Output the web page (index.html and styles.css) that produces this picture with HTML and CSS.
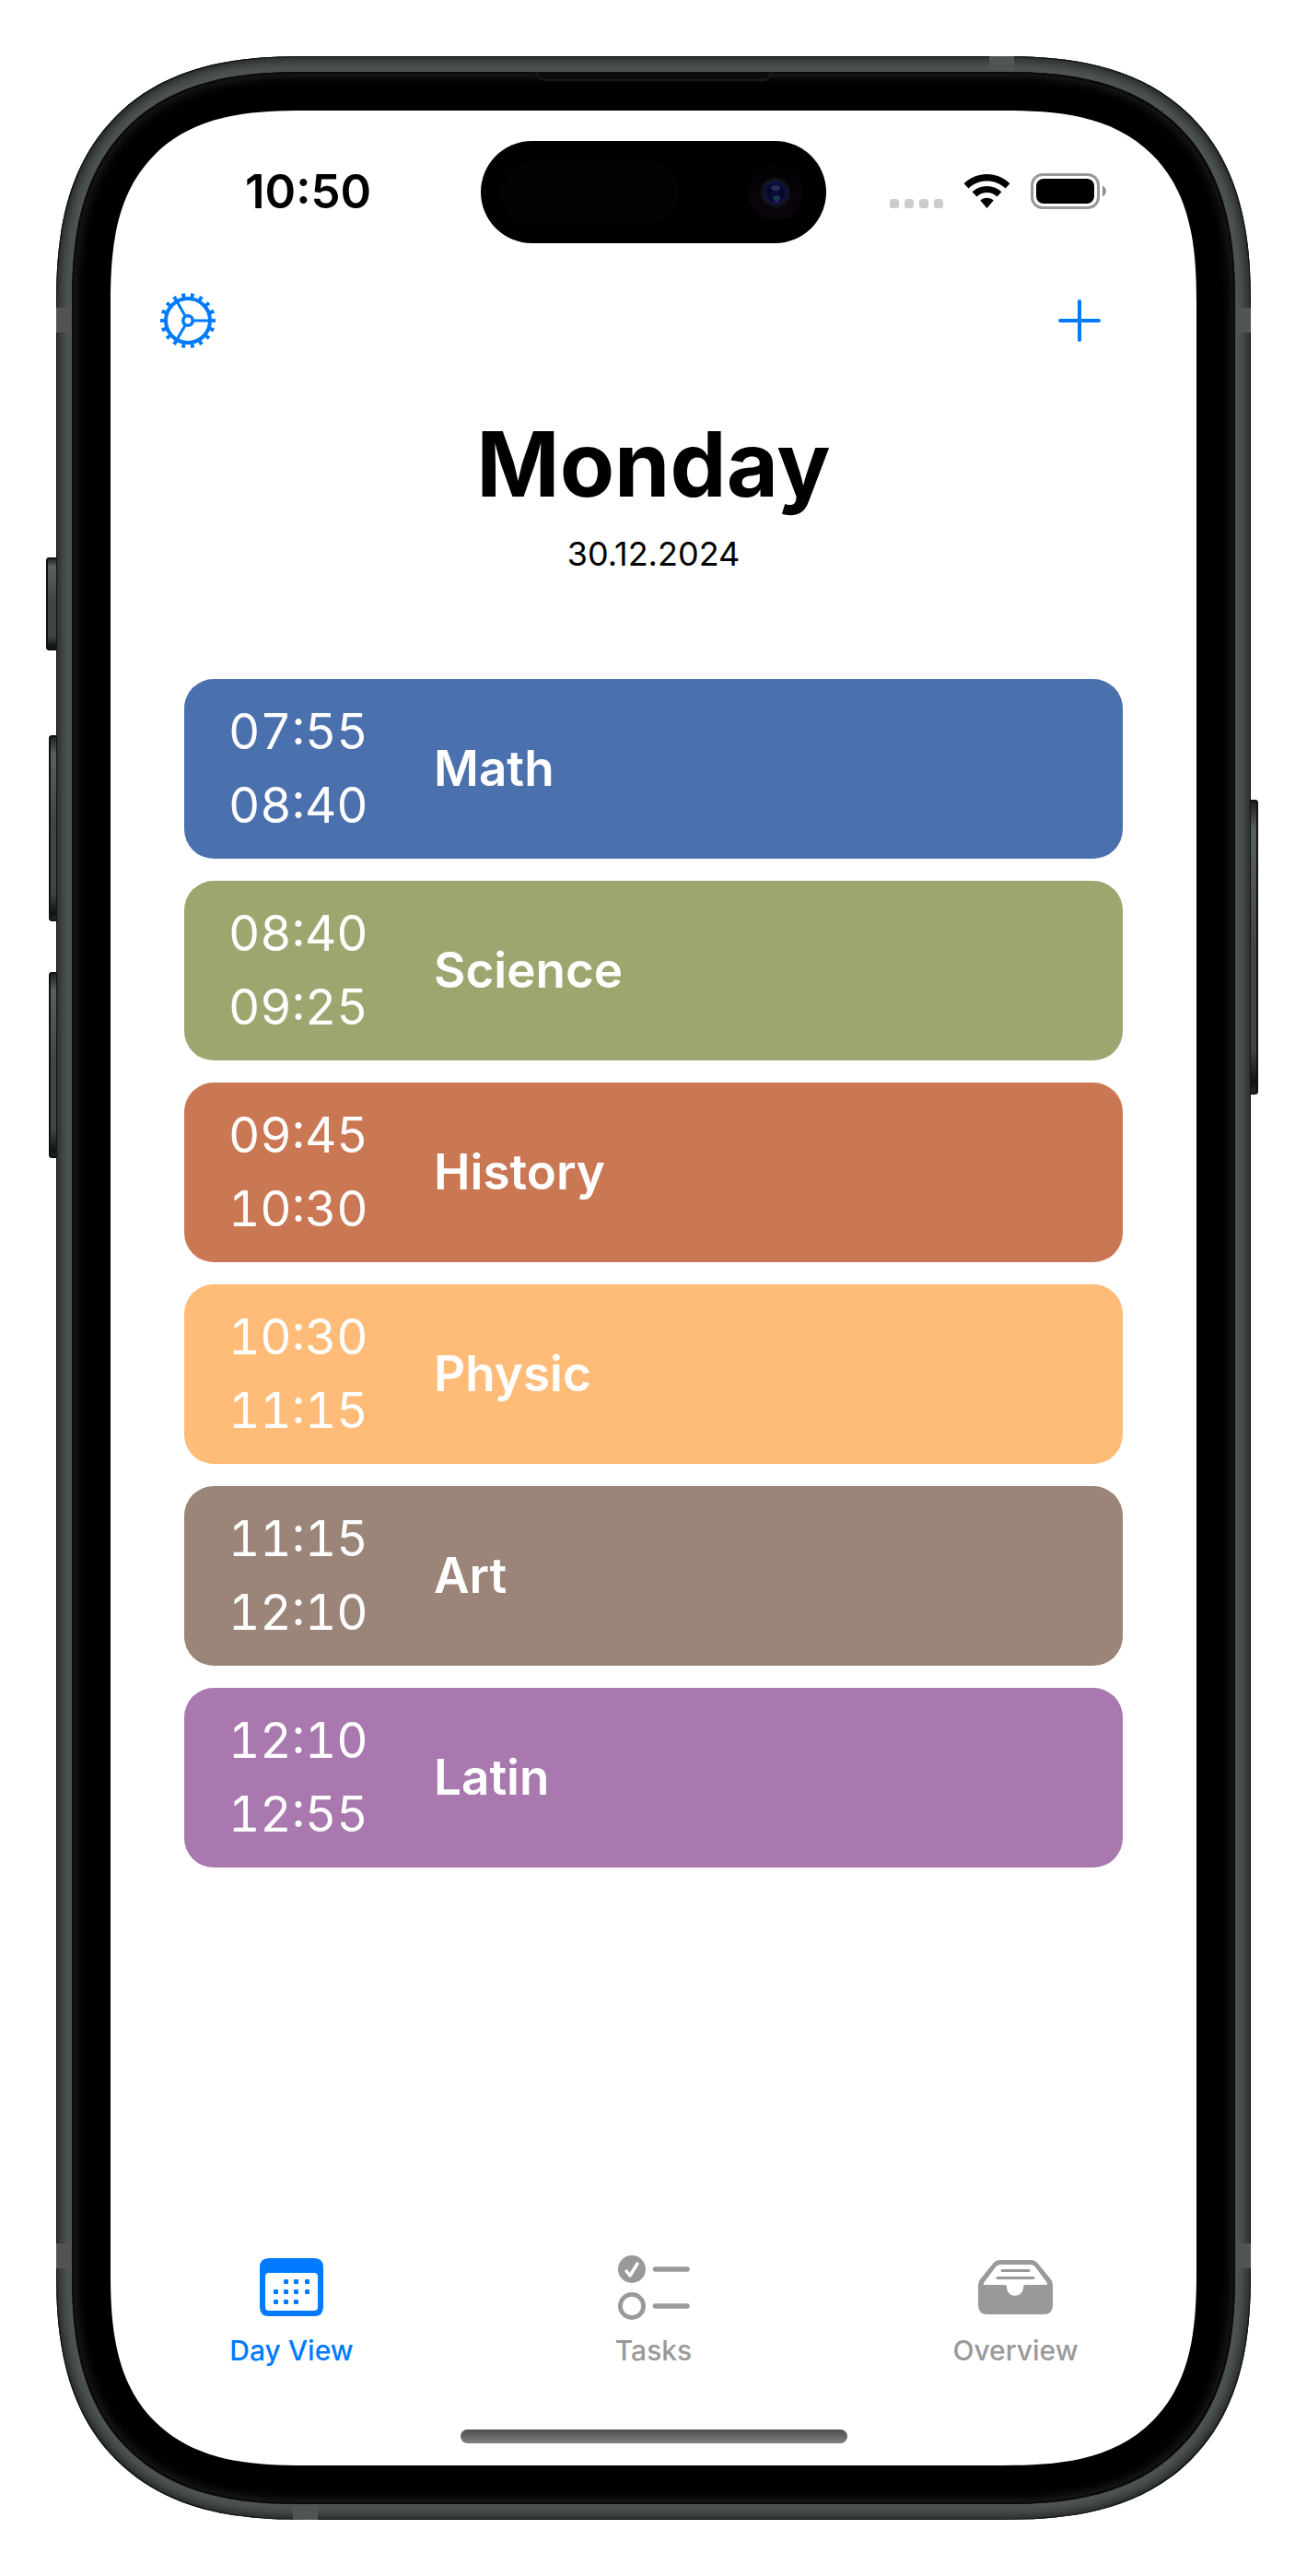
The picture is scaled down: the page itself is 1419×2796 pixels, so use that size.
FILE: index.html
```html
<!DOCTYPE html>
<html lang="en">
<head>
<meta charset="utf-8">
<meta name="viewport" content="width=device-width, initial-scale=1">
<title>Timetable</title>
<link rel="stylesheet" href="styles.css">
</head>
<body>
<div class="phone">
  <span class="key key-action"></span>
  <span class="key key-up"></span>
  <span class="key key-down"></span>
  <span class="key key-power"></span>
  <div class="frame">
    <span class="band band-left band-high"></span>
    <span class="band band-right band-high"></span>
    <span class="band band-left band-low"></span>
    <span class="band band-right band-low"></span>
    <span class="band band-top"></span>
    <span class="band band-bottom"></span>
    <div class="bezel">
      <svg class="speaker" width="258" height="10" viewBox="0 0 258 10" aria-hidden="true"><path d="M0 0C4 1 3 9 9 9H249C255 9 254 1 258 0" fill="#0c0c0c" stroke="#2c2c2c"/></svg>
      <div class="screen">
        <header class="status">
          <span class="clock">10:50</span>
          <div class="island">
            <span class="sensor"></span>
            <svg class="camera" width="60" height="60" viewBox="0 0 60 60" aria-hidden="true">
              <defs>
                <radialGradient id="lens" cx=".5" cy=".5" r=".5"><stop offset="0" stop-color="#0c0f38"/><stop offset=".7" stop-color="#070828"/><stop offset="1" stop-color="#10124e"/></radialGradient>
                <linearGradient id="housing" x1="0" y1="0" x2="0" y2="1"><stop offset="0" stop-color="#030303"/><stop offset="1" stop-color="#0b040c"/></linearGradient>
              </defs>
              <circle cx="30" cy="30" r="30" fill="url(#housing)"/>
              <circle cx="30" cy="30" r="16" fill="#11131f"/>
              <circle cx="30" cy="30" r="12" fill="url(#lens)"/>
              <ellipse cx="30" cy="25" rx="5" ry="3" fill="#272e5c"/>
              <ellipse cx="31" cy="36" rx="4" ry="3" fill="#123a48"/>
              <ellipse cx="31" cy="40" rx="3" ry="1" fill="#4a1670"/>
            </svg>
          </div>
          <div class="indicators">
            <svg width="58" height="39" viewBox="0 0 58 39" aria-hidden="true" fill="#ccc"><rect y="28" width="10" height="10" rx="3"/><rect x="16" y="28" width="10" height="10" rx="3"/><rect x="32" y="28" width="10" height="10" rx="3"/><rect x="48" y="28" width="10" height="10" rx="3"/></svg>
            <svg width="51" height="39" viewBox="0 0 51 39" aria-hidden="true"><path d="M0.6 11.2C14.500-2.500 36.500-2.500 50.400 11.200L45.500 16.400C34.300 5.800 16.700 5.800 5.500 16.400Z"/><path d="M9.600 20.300C18.500 11.800 32.500 11.800 41.400 20.300L36.500 25.500C30.300 19.600 20.700 19.600 14.500 25.500Z"/><path d="M18.300 29.500C22.400 25.800 28.600 25.800 32.700 29.500L25.500 38Z"/></svg>
            <svg width="82" height="39" viewBox="0 0 82 39" aria-hidden="true"><rect x="1.500" y="1.500" width="72" height="36" rx="11.500" fill="none" stroke="#999" stroke-width="3"/><rect x="6" y="6" width="63" height="27" rx="8"/><path d="M78 13.500C83 16 83 23 78 25.500Z" fill="#8c8c8c"/></svg>
          </div>
        </header>
        <nav class="toolbar" aria-label="Actions">
          <button class="icon-button" type="button" aria-label="Settings">
            <svg width="62" height="62" viewBox="-31 -31 62 62" fill="none" stroke="#007aff" stroke-linecap="round">
              <circle r="24" stroke-width="4"/>
              <circle r="5.200" stroke-width="3.600"/>
              <path d="M7 0H23M-3.500-6.100L-11.500-19.900M-3.500 6.100L-11.500 19.900" stroke-width="3"/>
              <circle r="27.500" stroke-width="5" stroke-linecap="butt" pathLength="180" stroke-dasharray="4 6" stroke-dashoffset="2"/>
            </svg>
          </button>
          <button class="icon-button" type="button" aria-label="Add lesson">
            <svg width="46" height="46" viewBox="0 0 46 46" fill="none" stroke="#007aff" stroke-width="4" stroke-linecap="round"><path d="M23 2V44M2 23H44"/></svg>
          </button>
        </nav>
        <main class="day">
          <h1 class="title">Monday</h1>
          <p class="date">30.12.2024</p>
          <ol class="lessons">
            <li class="lesson math"><span class="times"><time>07:55</time><time>08:40</time></span><h2 class="name">Math</h2></li>
            <li class="lesson science"><span class="times"><time>08:40</time><time>09:25</time></span><h2 class="name">Science</h2></li>
            <li class="lesson history"><span class="times"><time>09:45</time><time>10:30</time></span><h2 class="name">History</h2></li>
            <li class="lesson physic"><span class="times"><time>10:30</time><time>11:15</time></span><h2 class="name">Physic</h2></li>
            <li class="lesson art"><span class="times"><time>11:15</time><time>12:10</time></span><h2 class="name">Art</h2></li>
            <li class="lesson latin"><span class="times"><time>12:10</time><time>12:55</time></span><h2 class="name">Latin</h2></li>
          </ol>
        </main>
        <nav class="tabs" aria-label="Views">
          <a class="tab current" href="#day" aria-current="page">
            <svg width="69" height="70" viewBox="0 0 69 70" aria-hidden="true"><path fill="currentColor" fill-rule="evenodd" d="M10 3H59Q69 3 69 13V56Q69 66 59 66H10Q0 66 0 56V13Q0 3 10 3ZM10 19Q6 19 6 23V56Q6 60 10 60H59Q63 60 63 56V23Q63 19 59 19Z"/><g fill="currentColor"><rect x="26" y="26" width="5" height="5" rx="1"/><rect x="37" y="26" width="5" height="5" rx="1"/><rect x="49" y="26" width="5" height="5" rx="1"/><rect x="15" y="37" width="5" height="5" rx="1"/><rect x="26" y="37" width="5" height="5" rx="1"/><rect x="37" y="37" width="5" height="5" rx="1"/><rect x="49" y="37" width="5" height="5" rx="1"/><rect x="15" y="48" width="5" height="5" rx="1"/><rect x="26" y="48" width="5" height="5" rx="1"/><rect x="37" y="48" width="5" height="5" rx="1"/></g></svg>
            <span>Day View</span>
          </a>
          <a class="tab" href="#tasks">
            <svg width="78" height="70" viewBox="0 0 78 70" aria-hidden="true" fill="none" stroke="currentColor" stroke-linecap="round"><circle cx="15" cy="15" r="15" fill="currentColor" stroke="none"/><path d="M9 17L13 22L21 9" stroke="#fff" stroke-width="3.500" stroke-linejoin="round"/><circle cx="15" cy="55" r="12.600" stroke-width="4.800"/><path d="M40.500 15H75M40.500 55H75" stroke-width="5.500"/></svg>
            <span>Tasks</span>
          </a>
          <a class="tab" href="#overview">
            <svg width="81" height="70" viewBox="0 0 81 70" aria-hidden="true"><path fill="currentColor" fill-rule="evenodd" d="M24 5H57Q62 5 65 9L78 25Q81 28 81 32V54Q81 64 71 64H10Q0 64 0 54V32Q0 28 3 25L16 9Q19 5 24 5ZM24 10Q21 10 19 12.500L6 30Q5.500 32 7 32H29Q31 32 31 34C31 47 49 47 49 34Q49 32 51 32H74Q75.500 32 75 30L62 12.500Q60 10 57 10Z"/><path d="M26 16.500H55M21 24.500H60" stroke="currentColor" stroke-width="3" stroke-linecap="round"/></svg>
            <span>Overview</span>
          </a>
        </nav>
        <span class="home"></span>
      </div>
    </div>
  </div>
</div>
</body>
</html>
```
FILE: styles.css
```css
* {
  box-sizing: border-box;
}

body {
  margin: 0;
  min-height: 100vh;
  padding: 61px;
  display: flex;
  background: #fff;
  color: #000;
  font-family: Inter, "Liberation Sans", sans-serif;
}

/* Device body */
.phone {
  position: relative;
  flex: 1;
  display: flex;
}

.frame {
  position: relative;
  flex: 1;
  display: flex;
  padding: 17px;
  border-radius: 224px;
  background: #505556;
  box-shadow: inset 0 0 0 1px #111414, inset 0 0 14px 3px #171a1b;
  overflow: hidden;
}

.bezel {
  position: relative;
  flex: 1;
  display: flex;
  padding: 42px;
  border-radius: 207px;
  background: #000;
  box-shadow: inset 0 0 0 2px #0a0a0a, inset 0 0 14px 2px #2c2c2c;
}

.screen {
  flex: 1;
  display: flex;
  flex-direction: column;
  padding-top: 33px;
  border-radius: 165px;
  background: #fff;
}

@supports (corner-shape: superellipse(1.4)) {
  .frame {
    border-radius: 270px;
    corner-shape: superellipse(1.33);
  }

  .bezel {
    border-radius: 253px;
    corner-shape: superellipse(1.35);
  }

  .screen {
    border-radius: 210px;
    corner-shape: superellipse(1.42);
  }
}

.speaker {
  position: absolute;
  top: 0;
  left: 50%;
  translate: -50% 0;
}

.key {
  position: absolute;
  width: 14px;
  border-radius: 4px;
  background: linear-gradient(#1a1c1d, #5a5f60 10%, #404445 50%, #404445 85%, #101212 96%, #2a2d2e);
  box-shadow: inset 0 0 0 2px #101212;
}

.key-action {
  left: -11px;
  top: 544px;
  height: 101px;
}

.key-up {
  left: -8px;
  top: 737px;
  height: 202px;
}

.key-down {
  left: -8px;
  top: 994px;
  height: 202px;
}

.key-power {
  right: -8px;
  top: 807px;
  height: 320px;
}

.band {
  position: absolute;
  width: 17px;
  height: 27px;
  background: #505455;
}

.band-left {
  left: 0;
}

.band-right {
  right: 0;
}

.band-high {
  top: 273px;
}

.band-low {
  bottom: 273px;
}

.band-top,
.band-bottom {
  width: 27px;
  height: 17px;
}

.band-top {
  top: 0;
  right: 257px;
}

.band-bottom {
  bottom: 0;
  left: 257px;
}

/* Status bar */
.status {
  display: grid;
  grid-template-columns: 1fr 375px 1fr;
  align-items: center;
}

.clock {
  padding: 0 0 2px 146px;
  font-size: 51px;
  line-height: 60px;
  font-weight: 600;
}

.island {
  display: flex;
  align-items: center;
  justify-content: space-between;
  height: 111px;
  padding: 0 25px 0 22px;
  border-radius: 56px;
  background: #000;
}

.sensor {
  width: 194px;
  height: 66px;
  border-radius: 33px;
  background: #030303;
}

.indicators {
  display: flex;
  justify-content: flex-end;
  gap: 22px;
  padding: 0 98px 2px 0;
}

/* Toolbar */
.toolbar {
  display: flex;
  align-items: center;
  justify-content: space-between;
  height: 168px;
  padding: 0 104px 0 53px;
}

.icon-button {
  display: flex;
  padding: 0;
  border: 0;
  background: none;
  cursor: pointer;
}

/* Day schedule */
.day {
  flex: 1;
  padding: 0 80px 40px;
}

.title {
  margin: 0;
  padding-top: 12px;
  font-size: 97px;
  line-height: 120px;
  font-weight: 700;
  text-align: center;
}

.date {
  margin: 0;
  padding-top: 15px;
  font-size: 36px;
  line-height: 44px;
  text-align: center;
}

.lessons {
  display: flex;
  flex-direction: column;
  gap: 24px;
  margin: 0;
  padding: 114px 0 0;
  list-style: none;
}

.lesson {
  display: flex;
  align-items: center;
  gap: 75px;
  height: 195px;
  padding: 0 48px 2px;
  border-radius: 32px;
  color: #fff;
  font-size: 53px;
  line-height: 80px;
}

.times {
  display: flex;
  flex-direction: column;
  width: 148px;
  text-align: right;
  font-variant-numeric: tabular-nums;
}

.name {
  margin: 0;
  font-size: 53px;
  font-weight: 600;
}

.math {
  background: #4b70ae;
}

.science {
  background: #9ca770;
}

.history {
  background: #ca7754;
}

.physic {
  background: #ffbc79;
}

.art {
  background: #9b8578;
}

.latin {
  background: #a878ae;
}

/* Tab bar */
.tabs {
  display: grid;
  grid-template-columns: repeat(3, 1fr);
}

.tab {
  display: flex;
  flex-direction: column;
  align-items: center;
  gap: 14px;
  color: #999;
  font-size: 30px;
  line-height: 38px;
  font-weight: 500;
  text-decoration: none;
}

.current {
  color: #007aff;
}

.home {
  align-self: center;
  width: 420px;
  height: 15px;
  margin: 67px 0 24px;
  border-radius: 8px;
  background: linear-gradient(#4c4c4c, #808080);
}
```
